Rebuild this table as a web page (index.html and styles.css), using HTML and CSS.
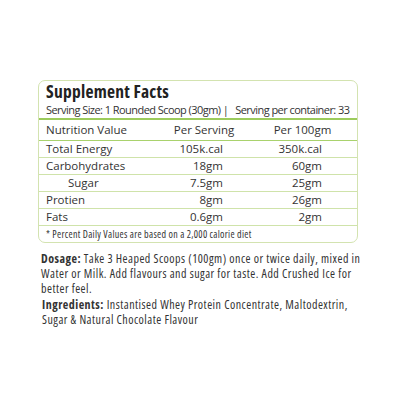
FILE: index.html
```html
<!DOCTYPE html>
<html>
<head>
<meta charset="utf-8">
<link rel="stylesheet" href="styles.css">
</head>
<body>
<div class="page">
  <div class="facts">
    <div class="title">Supplement Facts</div>
    <div class="serving">Serving Size: 1 Rounded Scoop (30gm) |&nbsp;&nbsp; Serving per container: 33</div>
    <div class="row head">
      <span class="label">Nutrition Value</span>
      <span class="c2">Per Serving</span>
      <span class="c3">Per 100gm</span>
    </div>
    <div class="row">
      <span class="label">Total Energy</span>
      <span class="v2">105k.cal</span>
      <span class="v3">350k.cal</span>
    </div>
    <div class="row">
      <span class="label">Carbohydrates</span>
      <span class="v2">18gm</span>
      <span class="v3">60gm</span>
    </div>
    <div class="row">
      <span class="label sub">Sugar</span>
      <span class="v2">7.5gm</span>
      <span class="v3">25gm</span>
    </div>
    <div class="row">
      <span class="label">Protien</span>
      <span class="v2">8gm</span>
      <span class="v3">26gm</span>
    </div>
    <div class="row">
      <span class="label">Fats</span>
      <span class="v2">0.6gm</span>
      <span class="v3">2gm</span>
    </div>
    <div class="note">* Percent Daily Values are based on a 2,000 calorie diet</div>
  </div>
  <p class="dosage"><b>Dosage:</b> Take 3 Heaped Scoops (100gm) once or twice daily, mixed in Water or Milk. Add flavours and sugar for taste. Add Crushed Ice for better feel.</p>
  <p class="ingr"><b>Ingredients:</b> Instantised Whey Protein Concentrate, Maltodextrin, Sugar &amp; Natural Chocolate Flavour</p>
</div>
</body>
</html>
```

FILE: styles.css
```css
html, body {
  margin: 0;
  padding: 0;
  background: #fff;
}
body {
  font-family: "Open Sans", "DejaVu Sans", sans-serif;
  color: #333;
}
.page {
  padding: 80px 0 0 38px;
  width: 324px;
}
.facts {
  width: 318px;
  border: 1px solid #d3e3b0;
  border-radius: 7px;
  overflow: hidden;
}
.title {
  font-weight: 700;
  font-size: 17.5px;
  line-height: 20px;
  color: #222;
  padding-left: 7px;
  font-stretch: 75%;
  letter-spacing: 0.25px;
}
.serving {
  font-size: 11px;
  line-height: 17px;
  padding-left: 7px;
  border-bottom: 2px solid #9ccb5c;
  white-space: nowrap;
  letter-spacing: -0.55px;
}
.row {
  display: grid;
  grid-template-columns: 121px 88px 109px;
  font-size: 11.5px;
  line-height: 16px;
  border-bottom: 1px solid #cfe3aa;
}
.row.head {
  line-height: 20px;
  font-size: 11.5px;
  border-bottom: 1px solid #a9d26d;
}
.label {
  padding-left: 7px;
}
.label.sub {
  padding-left: 29px;
}
.c2, .c3 {
  text-align: center;
}
.v2 {
  text-align: right;
  padding-right: 25px;
}
.v3 {
  text-align: right;
  padding-right: 35px;
}
.note {
  font-size: 10px;
  line-height: 16px;
  padding-left: 7px;
  font-stretch: 75%;
  letter-spacing: 0.3px;
}
.dosage, .ingr {
  margin: 0;
  font-size: 12px;
  line-height: 15px;
  color: #333;
  font-stretch: 75%;
  letter-spacing: 0.48px;
}
.dosage {
  margin-top: 8px;
  padding-left: 3px;
}
.ingr {
  margin-top: 1px;
  padding-left: 4px;
}
```
